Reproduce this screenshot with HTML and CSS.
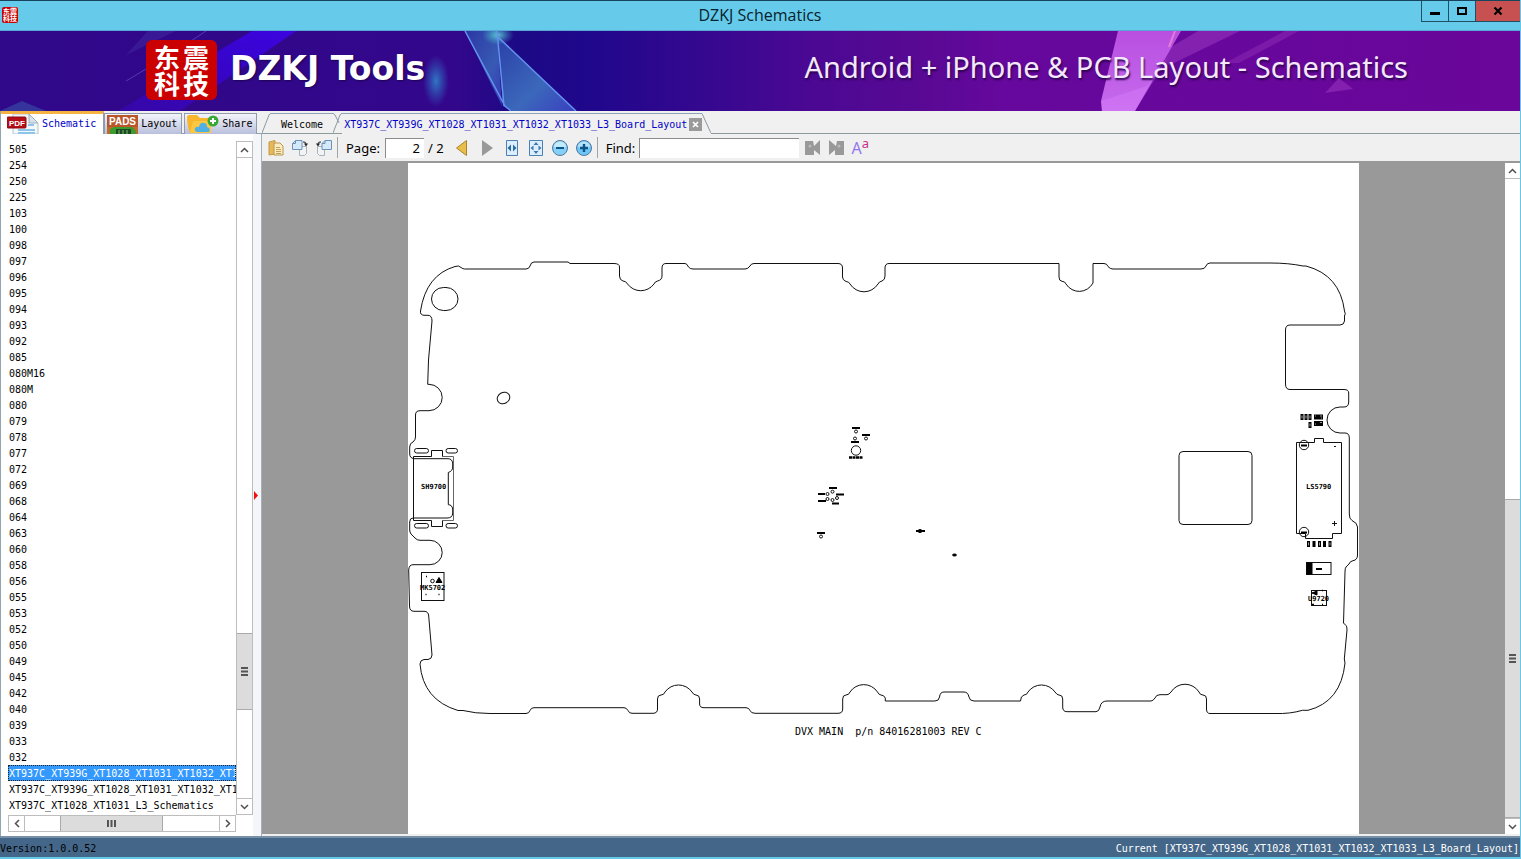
FILE: index.html
```html
<!DOCTYPE html>
<html lang="en">
<head>
<meta charset="utf-8">
<title>DZKJ Schematics</title>
<link rel="stylesheet" href="styles.css">
</head>
<body>
<div class="window">
  <header class="titlebar">
    <span class="app-icon" aria-hidden="true"><i>东</i><i>震</i><i>科</i><i>技</i></span>
    <h1 class="window-title">DZKJ Schematics</h1>
    <div class="window-buttons">
      <button class="win-btn" aria-label="Minimize"><svg width="10" height="10" viewBox="0 0 10 10"><path d="M0 6h10v3H0z"/></svg></button>
      <button class="win-btn" aria-label="Maximize"><svg width="10" height="10" viewBox="0 0 10 10"><path d="M1 2h8v6H1z" fill="none" stroke="#000" stroke-width="2"/></svg></button>
      <button class="win-btn win-close" aria-label="Close"><svg width="10" height="10" viewBox="0 0 10 10"><path d="M1.500 1.500l7 7M8.500 1.500l-7 7" stroke="#000" stroke-width="2.200"/></svg></button>
    </div>
  </header>

  <div class="banner">
    <svg class="banner-art" viewBox="0 0 1520 80" preserveAspectRatio="none" aria-hidden="true">
      <defs>
        <linearGradient id="sky" x1="0" x2="1" y1="0" y2="0">
          <stop offset="0" stop-color="#30088a"/><stop offset=".3" stop-color="#33078b"/><stop offset=".34" stop-color="#1c0a85"/>
          <stop offset=".39" stop-color="#20078c"/><stop offset=".46" stop-color="#34088f"/><stop offset=".53" stop-color="#4a0893"/><stop offset=".6" stop-color="#570993"/>
          <stop offset=".66" stop-color="#66089d"/><stop offset="1" stop-color="#6a069a"/>
        </linearGradient>
        <linearGradient id="ray" x1="1" x2="0" y1="0" y2="1"><stop offset="0" stop-color="#3d04e0"/><stop offset=".45" stop-color="#3605c8"/><stop offset="1" stop-color="#3a06c0" stop-opacity=".5"/></linearGradient>
        <linearGradient id="shard" x1="0" x2="1" y1="0" y2="1"><stop offset="0" stop-color="#2b3fa8"/><stop offset=".6" stop-color="#3b68bb"/><stop offset="1" stop-color="#3a3fc0"/></linearGradient>
        <linearGradient id="pink" x1="0" x2="0" y1="0" y2="1"><stop offset="0" stop-color="#b94fe0"/><stop offset="1" stop-color="#c66bee"/></linearGradient>
        <radialGradient id="glow"><stop offset="0" stop-color="#2f83c8" stop-opacity=".9"/><stop offset="1" stop-color="#2f6fc8" stop-opacity="0"/></radialGradient>
        <radialGradient id="spark"><stop offset="0" stop-color="#5fd3d8" stop-opacity=".9"/><stop offset="1" stop-color="#3fb0c8" stop-opacity="0"/></radialGradient>
      </defs>
      <rect width="1520" height="80" fill="url(#sky)"/>
      <path d="M252 0h44L180 80h-62z" fill="url(#ray)"/>
      <path d="M148 0h28l-50 24z" fill="#4a3aa8" opacity=".35"/>
      <path d="M206 0l-30 20M176 20l-50 30" stroke="#6a5ad0" stroke-width="1" opacity=".6"/>
      <path d="M0 80l22-10 24 10z" fill="#3a60b0" opacity=".5"/>
      <ellipse cx="436" cy="50" rx="13" ry="26" fill="url(#glow)"/>
      <path d="M465 0h32l5 75z" fill="url(#shard)" opacity=".85"/>
      <path d="M498 6l78 74h-64l-9-5z" fill="url(#shard)"/>
      <ellipse cx="498" cy="4" rx="16" ry="10" fill="url(#spark)"/>
      <path d="M465 0l40 75 6 5M497 0l7 75M498 6l78 74" stroke="#6392ee" stroke-width="1.500" fill="none"/>
      <path d="M1198 0h42l-70 34-16-8z" fill="#a03cc4" opacity=".5"/>
      <path d="M1285 0h14l-60 32h-14z" fill="#a03cc4" opacity=".35"/>
      <path d="M1118 0h63l-46 80h-33l-1-10z" fill="url(#pink)"/>
      <path d="M1101 70l46-15 22-30-34 55h-33z" fill="#dd83fb" opacity=".35"/>
      <path d="M1175 0l-6 16" stroke="#ff9ad0" stroke-width="2" opacity=".6"/>
      <path d="M1339 47l14 11-28 4z" fill="#8420b0"/>
    </svg>
    <div class="brand">
      <span class="logo" lang="zh"><i>东</i><i>震</i><i>科</i><i>技</i></span>
      <span class="brand-name">DZKJ Tools</span>
    </div>
    <p class="tagline">Android + iPhone &amp; PCB Layout - Schematics</p>
  </div>

  <main class="workspace">
    <aside class="sidebar">
      <div class="side-tabs" role="tablist">
        <button class="side-tab side-tab-active" role="tab" aria-selected="true">
          <svg width="32" height="20" viewBox="0 0 32 20" aria-hidden="true"><path d="M6 0h16l9 9v11H6z" fill="#f4f8fb" stroke="#b7c3cc"/><path d="M22 0v9h9z" fill="#d5e2ea" stroke="#9fb0bc"/><path d="M11 16h17M11 19h17M21 11h6" stroke="#8ec5ea" stroke-width="2"/><rect y="3" width="19" height="11" rx="1" fill="#b40e18" stroke="#8d0a12"/><text x="2" y="12" class="badge-text">PDF</text></svg>
          Schematic
        </button>
        <button class="side-tab" role="tab" aria-selected="false">
          <svg width="31" height="19" viewBox="0 0 31 19" aria-hidden="true"><rect width="31" height="19" fill="#c06a2a"/><rect width="31" height="12" fill="#b9572a"/><path d="M3 19v-5l4-2h18l4 4v3z" fill="#3d9a2c"/><rect x="9" y="14" width="15" height="5" fill="#1c4a24"/><path d="M12 15v4M16 15v4M20 15v4" stroke="#74c060"/><text x="2" y="10" class="badge-text badge-pads">PADS</text></svg>
          Layout
        </button>
        <button class="side-tab" role="tab" aria-selected="false">
          <svg width="32" height="18" viewBox="0 0 32 18" aria-hidden="true"><path d="M0 2q0-2 2-2h8l3 3h11v15H3q-3-7-3-16z" fill="#f8b62c"/><path d="M3 18L6 6h18v12z" fill="#fdc741"/><path d="M10 17q-3-1-2-4 2-2 4-1 1-5 5-4 3 0 3 4 4 1 2 5z" fill="#4fb0e6"/><circle cx="26" cy="6" r="5.500" fill="#39a935"/><path d="M26 3v6M23 6h6" stroke="#fff" stroke-width="2"/></svg>
          Share
        </button>
      </div>
      <div class="side-panel">
        <ul class="file-list" role="listbox" aria-label="Schematics">
          <li>505</li><li>254</li><li>250</li><li>225</li><li>103</li><li>100</li><li>098</li><li>097</li><li>096</li><li>095</li>
          <li>094</li><li>093</li><li>092</li><li>085</li><li>080M16</li><li>080M</li><li>080</li><li>079</li><li>078</li><li>077</li>
          <li>072</li><li>069</li><li>068</li><li>064</li><li>063</li><li>060</li><li>058</li><li>056</li><li>055</li><li>053</li>
          <li>052</li><li>050</li><li>049</li><li>045</li><li>042</li><li>040</li><li>039</li><li>033</li><li>032</li>
          <li class="selected">XT937C_XT939G_XT1028_XT1031_XT1032_XT1033_L3_Board_Layout</li>
          <li>XT937C_XT939G_XT1028_XT1031_XT1032_XT1033_L3_Schematics</li>
          <li>XT937C_XT1028_XT1031_L3_Schematics</li>
        </ul>
        <div class="vscroll">
          <button class="sb-btn" aria-label="Scroll up"><svg width="9" height="6" viewBox="0 0 9 6"><path d="M1 5l3.500-3.500L8 5"/></svg></button>
          <div class="sb-track sb-side"><div class="sb-thumb"><svg width="7" height="9" viewBox="0 0 7 9"><path d="M0 1h7M0 4.500h7M0 8h7"/></svg></div></div>
          <button class="sb-btn" aria-label="Scroll down"><svg width="9" height="6" viewBox="0 0 9 6"><path d="M1 1l3.500 3.500L8 1"/></svg></button>
        </div>
        <div class="hscroll">
          <button class="sb-btn" aria-label="Scroll left"><svg width="6" height="9" viewBox="0 0 6 9"><path d="M5 1L1.500 4.500 5 8"/></svg></button>
          <div class="sb-track sb-horizontal"><div class="sb-thumb"><svg width="9" height="7" viewBox="0 0 9 7"><path d="M1 0v7M4.500 0v7M8 0v7"/></svg></div></div>
          <button class="sb-btn" aria-label="Scroll right"><svg width="6" height="9" viewBox="0 0 6 9"><path d="M1 1l3.500 3.500L1 8"/></svg></button>
        </div>
      </div>
    </aside>
    <div class="splitter" role="separator"><svg width="6" height="9" viewBox="0 0 6 9" aria-hidden="true"><path d="M1 0l4 4.500L1 9z" fill="#f01010"/></svg></div>

    <section class="viewer">
      <div class="doc-tabs" role="tablist">
        <button class="doc-tab" role="tab" aria-selected="false">
          <svg class="edge" width="9" height="20" viewBox="0 0 9 20"><path d="M0 20L7 2Q8 .5 9 .5"/></svg>
          <span class="doc-label">Welcome</span>
          <svg class="edge" width="9" height="20" viewBox="0 0 9 20"><path d="M0 .5Q1 .5 2 2l4 8"/></svg>
        </button>
        <div class="doc-tab doc-tab-active">
          <svg class="edge" width="9" height="20" viewBox="0 0 9 20"><path d="M0 20L7 2Q8 .5 9 .5"/></svg>
          <span class="doc-label"><button class="tab-name" role="tab" aria-selected="true">XT937C_XT939G_XT1028_XT1031_XT1032_XT1033_L3_Board_Layout</button>
          <button class="tab-close" aria-label="Close tab"><svg width="7" height="7" viewBox="0 0 7 7"><path d="M1 1l5 5M6 1L1 6" stroke="#fff" stroke-width="1.700"/></svg></button></span>
          <svg class="edge" width="9" height="20" viewBox="0 0 9 20"><path d="M0 .5L8 18l1 2"/></svg>
        </div>
        <div class="doc-fill"></div>
      </div>

      <div class="toolbar" role="toolbar">
        <button class="tool" aria-label="Copy"><svg width="16" height="16" viewBox="0 0 16 16"><path d="M1 2l6-1.500V14L1 15z" fill="#e8b95c" stroke="#c39a45"/><path d="M6 3h6l3 3v9H6z" fill="#fbecc0" stroke="#b9964c"/><path d="M8 7.500h4M8 9.500h5M8 11.500h5M8 13.500h5" stroke="#c4a25c"/></svg></button>
        <button class="tool" aria-label="Rotate right"><svg width="16" height="16" viewBox="0 0 16 16"><path d="M7.500 6.500h7v7l-2 2h-5z" fill="#f1f3f5" stroke="#a8b2bb"/><path d="M3.500.5H10v9H.5v-6z" fill="#d5e9fa" stroke="#6b93ba"/><path d="M.5 3.500h3v-3" fill="none" stroke="#6b93ba"/><path d="M11 2q3-.5 3 2" fill="none" stroke="#222"/><path d="M12 3.500h4l-2 3z" fill="#222"/></svg></button>
        <button class="tool" aria-label="Rotate left"><svg width="16" height="16" viewBox="0 0 16 16"><path d="M1.500 6.500h7v9h-5l-2-2z" fill="#f1f3f5" stroke="#a8b2bb"/><path d="M9 .5h6.500v9H6v-6z" fill="#d5e9fa" stroke="#6b93ba"/><path d="M6 3.500h3v-3" fill="none" stroke="#6b93ba"/><path d="M5 2q-3-.5-3 2" fill="none" stroke="#222"/><path d="M0 3.500h4l-2 3z" fill="#222"/></svg></button>
        <span class="sep"></span>
        <label class="tool-label" for="page">Page:</label>
        <input class="page-input" id="page" type="text" value="2">
        <span class="page-total">/ 2</span>
        <button class="tool" aria-label="Previous page"><svg width="12" height="16" viewBox="0 0 12 16"><path d="M10.500.5v15L.5 8z" fill="#e9bf4b" stroke="#aa8427"/></svg></button>
        <button class="tool tool-wide" aria-label="Next page"><svg width="12" height="16" viewBox="0 0 12 16"><path d="M1 0l11 8-11 8z" fill="#999"/></svg></button>
        <button class="tool" aria-label="Fit width"><svg width="12" height="16" viewBox="0 0 12 16"><path d="M.5.5h11v15H.5z" fill="#dceefc" stroke="#4c80b4"/><path d="M5 4.500v7L1.500 8zM7 4.500v7L10.500 8z" fill="#2b6ca3"/></svg></button>
        <button class="tool" aria-label="Fit page"><svg width="14" height="16" viewBox="0 0 14 16"><path d="M.5.5h13v15H.5z" fill="#dceefc" stroke="#4c80b4"/><path d="M7 2l2.500 3h-5zM7 14l2.500-3h-5zM1.500 8l3-2.500v5zM12.500 8l-3-2.500v5z" fill="#3d78ac"/></svg></button>
        <button class="tool" aria-label="Zoom out"><svg width="16" height="16" viewBox="0 0 16 16"><circle cx="8" cy="8" r="7.500" fill="#84d0f8" stroke="#52789d"/><path d="M2 7a6 5.500 0 0 1 12 0q-6 3-12 0" fill="#c4eafd"/><path d="M4 8h8" stroke="#0d5487" stroke-width="2"/></svg></button>
        <button class="tool" aria-label="Zoom in"><svg width="16" height="16" viewBox="0 0 16 16"><circle cx="8" cy="8" r="7.500" fill="#6ec6f6" stroke="#52789d"/><path d="M2 7a6 5.500 0 0 1 12 0q-6 3-12 0" fill="#b4e2fb"/><path d="M4 8h8M8 4v8" stroke="#0d5487" stroke-width="2.400"/></svg></button>
        <span class="sep"></span>
        <label class="tool-label" for="find">Find:</label>
        <input class="find-input" id="find" type="text">
        <button class="tool" aria-label="Find previous"><svg width="15" height="15" viewBox="0 0 15 15"><path d="M0 1h8l1 5 6-6v15l-6-5v5H0z" fill="#999"/><circle cx="5" cy="6" r="1.500" fill="#bbb"/></svg></button>
        <button class="tool" aria-label="Find next"><svg width="15" height="15" viewBox="0 0 15 15"><path d="M15 1H8L7 6 0 0v15l6-5v5h9z" fill="#999"/><circle cx="10" cy="6" r="1.500" fill="#bbb"/></svg></button>
        <button class="tool match-case" aria-label="Match case">A<sup>a</sup></button>
      </div>

      <div class="canvas-row">
        <div class="canvas">
          <svg class="page" viewBox="408 163 951 671" role="img" aria-label="DVX MAIN board layout">
            <g class="lines">
              <path d="M464.700 269H526Q529 269 530 266Q531 262 534 262H568L570 263.500H614Q619.500 263.500 619.500 267V276Q619.500 280 623 281Q626 281 627.500 284A17 18 0 0 0 654 284Q655 281.500 657.500 281Q662 280 662 276V268Q662 263.500 666 263.500H685Q687 263.500 688.500 267Q690 269 693 269H745Q748 269 750 266Q751 263.500 754 263.500H838Q842.500 263.500 842.500 268V277Q842.500 280 846 281.500Q849 281.500 850 284A17 18 0 0 0 878 284Q879 281.500 882 281Q885 280 885 276V268Q885 263.500 889 263.500H1059V277Q1059 281 1062 281.300Q1065 281.300 1066 284A16 17 0 0 0 1093 283V263.500H1104Q1107 263.500 1108 266.500Q1110 269 1113 269H1201Q1205 269 1206 266Q1207 263 1210 263H1270Q1289 263 1303 266H1306Q1340 275 1344.500 311Q1346 314 1344.500 316V321Q1344 325 1340 325H1290Q1285.500 325 1285.500 330V384Q1285.500 389.500 1290 389.500H1344Q1348.700 389.500 1348.700 393V402Q1348.700 407 1344 407H1340A13 13 0 0 0 1340 433H1345Q1349.300 433 1349.300 438V514Q1349.300 519 1352 520.500Q1357.500 523 1357.500 527V555Q1357.500 560 1353 560.700Q1350 561 1349 564L1346 567Q1345 568 1345 572L1343.500 623L1346 625.500Q1347 626 1347 630L1344.300 659L1345 663Q1341 702 1308 710.300H1302.500Q1290 714 1275 713.500H1210Q1206.500 713.500 1206.500 709V699Q1206.500 695 1203 695Q1200 695 1199 692A16.500 16.500 0 0 0 1171 692Q1169 694.700 1167 694.700H1160Q1156 694.700 1155 698Q1153 701 1151 701H1107Q1101 701 1100 707Q1099 711.700 1096 711.700H1067Q1062.700 711.700 1062.700 707V699Q1062.700 695 1059 695Q1057 695 1055 692A16.500 16.500 0 0 0 1028 692Q1027 695 1024 695Q1020.500 696 1020.500 701H974Q969.500 701 969 697Q968 692 964 692H944Q940 692 939.500 697Q939 701 935 701H885.300V698Q884 695 881 695Q879 695 877.500 692A16.500 16.500 0 0 0 850 692Q849 695 846 695Q842.700 695 842.700 699V709Q842.700 713.300 838 713.300H755Q751 713.300 750 710.500Q749 707.700 746 707.700H704Q699.600 707.700 699.600 704V699Q699.600 695 696 695Q693.500 695 692 692A16.500 16.500 0 0 0 665 692Q664 695 661 695Q657.500 695 657.500 699V709Q657.500 713.300 653 713.300H632Q629 713.300 628 710.500Q626.500 707.700 624 707.700H534Q531 707.700 530 710.500Q529 713.500 526 713.500H490Q475 713.500 463 710.500H458Q423 700 420 664Q420 660 424 659.500H428Q432 659 432 655L428.700 616Q428.500 611.300 424 611.300H414Q409.500 611.300 409.500 606L408.700 570Q409 564.700 413 564.700H430A12 12 0 0 0 430 540.300H420Q417 540.300 415 538L411 534Q409.700 532 409.700 530V522Q409.700 518 413 518H447Q452.700 518 452.700 513V509Q452 504.700 448.300 504.700V472.500Q452.700 471 452.700 467V463Q452 458.700 448 458.700H414Q409.700 458 409.700 454V447Q409.700 443 413 442Q415.500 440 415.500 437V415Q415.500 410.700 420 410.700H429A13 13 0 0 0 429 384.300H427.700L428.500 360L432 321Q432 315.300 428 315.300H424Q420 315 420.500 311Q426 275 455 266.500Q459 265 461 267.500Q463 269 464.700 269Z"/>
              <rect x="431.500" y="287.500" width="26.500" height="23" rx="12"/>
              <ellipse cx="503.500" cy="398" rx="6.500" ry="5.500" transform="rotate(-30 503.500 398)"/>
              <path class="soft" d="M442.500 456.500h11v64h-11"/>
              <path d="M431.500 456.500v-6h11v6M431.500 520.500v6h11v-6M431.500 456.500h-18v64h18"/>
              <rect x="414.500" y="448.500" width="14" height="4.500" rx="2.200"/><rect x="446" y="448.500" width="11.500" height="4.500" rx="2.200"/>
              <rect x="414.500" y="523.500" width="14" height="4.500" rx="2.200"/><rect x="446" y="523.500" width="11.500" height="4.500" rx="2.200"/>
              <rect x="421.500" y="572.500" width="22.500" height="28"/><circle cx="432.500" cy="581" r="1.800"/>
              <rect x="1179" y="451.500" width="73" height="73" rx="4"/>
              <path d="M1296.500 442.500H1314.500v-4h9v4h18v91h-9v5h-27v-5h-9z"/>
              <circle cx="1304" cy="445" r="4.700"/><circle cx="1304" cy="532" r="4.700"/><path d="M1332 523.500h5M1334.500 521v5M1334 446.500h2"/>
              <rect x="1306.500" y="562.500" width="24.500" height="12"/><rect x="1311.500" y="590.500" width="15" height="15"/>
              <circle cx="856" cy="431.500" r="1.500"/><circle cx="855" cy="438.500" r="1.500"/><circle cx="866" cy="438.500" r="1.500"/><circle cx="856" cy="450.500" r="4.700"/>
              <circle cx="832.500" cy="491.700" r="1.500"/><circle cx="827.500" cy="494" r="1.500"/><circle cx="827.500" cy="499" r="1.500"/><circle cx="832.500" cy="500" r="1.500"/><circle cx="837" cy="498" r="1.500"/><circle cx="821" cy="536.500" r="1.500"/>
            </g>
            <g class="marks">
              <path d="M852 428h8M862 435h8M851 442h8M829 488h8M818 494h7M836 494.500h8M818 501h8M832 503.500h7M817 533h8M916 531h9M1301 445.500h6M1301 532.500h6M1316 569h6" stroke-width="2"/>
              <path d="M849 457.500h14" stroke-width="2.500" stroke-dasharray="3 .5"/>
              <path d="M1302 414v6M1306 414v6M1310 414v6M1310 422v6M1308.500 541v6M1314 541v6M1319.500 541v6M1324.500 541v6M1330 541v6" stroke-width="3"/>
              <path d="M1314 417h9M1314 423.500h9" stroke-width="5"/>
              <ellipse cx="920" cy="531" rx="2" ry="1.500"/><ellipse cx="954.500" cy="555" rx="2" ry="1"/><path d="M436 582.500l3-5 3 5zM1307 563h5v11h-5zM1312 593l5-2v4z"/>
              <path d="M426 576.500h1M425.500 594.500h1M438.500 594.500h1M1322 590.500h1M1312 604.500h2M1322 604.500h1" stroke-width="1.500"/>
            </g>
            <path d="M1315 416h1M1320 416h2M1321 418h1M1320 422.500h2M1315 424h1M1302 415.500v3M1306 415.500v3M1310 415.500v3M1310 423.500v3M1308.500 542.500v3M1319.500 542.500v3M1330 542.500v3" stroke="#999"/>
            <g class="part-name"><text x="421" y="489">SH9700</text><text x="420" y="590">MK5702</text><text x="1306" y="489">LS5790</text><text x="1308" y="601">U9720</text></g>
            <text class="board-name" x="795" y="735">DVX MAIN  p/n 84016281003 REV C</text>
          </svg>
        </div>
        <div class="vscroll doc-scroll">
          <button class="sb-btn" aria-label="Scroll up"><svg width="9" height="6" viewBox="0 0 9 6"><path d="M1 5l3.500-3.500L8 5"/></svg></button>
          <div class="sb-track sb-doc"><div class="sb-thumb"><svg width="7" height="9" viewBox="0 0 7 9"><path d="M0 1h7M0 4.500h7M0 8h7"/></svg></div></div>
          <button class="sb-btn" aria-label="Scroll down"><svg width="9" height="6" viewBox="0 0 9 6"><path d="M1 1l3.500 3.500L8 1"/></svg></button>
        </div>
      </div>
    </section>
  </main>

  <footer class="statusbar">
    <span class="version">Version:1.0.0.52</span>
    <span class="current">Current [XT937C_XT939G_XT1028_XT1031_XT1032_XT1033_L3_Board_Layout]</span>
  </footer>
</div>
</body>
</html>
```
FILE: styles.css
```css
* { box-sizing: border-box; }
body { margin: 0; font: 10px/16px "DejaVu Sans Mono", "Noto Sans CJK SC", monospace; color: #000; }
button { margin: 0; padding: 0; border: 0; background: none; font: inherit; color: inherit; }
svg { display: block; flex: none; }
i { font-style: normal; }

.window { display: flex; flex-direction: column; height: 100vh; overflow: hidden; background: #f0f0f0; border-right: 1px solid #66c8e8; border-bottom: 2px solid #66c8e8; }

.titlebar { display: grid; grid-template-columns: 99px 1fr 99px; height: 31px; flex: none; background: #66cbea; border-top: 1px solid #17445c; border-bottom: 1px solid #5aa6d6; }
.app-icon { display: grid; grid-template-columns: 7px 7px; place-content: center; width: 16px; height: 16px; margin: 6px 0 0 2px; border-radius: 2px; background: #c80000; color: #fff; font: 700 7px/7px "Noto Sans CJK SC", sans-serif; }
.window-title { margin: 0; text-align: center; font: 400 16px/28px "Open Sans", "Noto Sans", sans-serif; color: #06222e; }
.window-buttons { display: flex; height: 21px; border: solid #1f4f63; border-width: 0 0 1px 1px; }
.win-btn { width: 27px; display: grid; place-items: center; border-right: 1px solid #1f4f63; }
.win-close { flex: 1; background: #c75050; border-right: 0; }

.banner { position: relative; display: flex; align-items: center; justify-content: space-between; height: 80px; flex: none; padding: 0 112px 2px 146px; color: #fff; overflow: hidden; }
.banner-art { position: absolute; inset: 0; width: 100%; height: 100%; }
.brand { position: relative; display: flex; align-items: center; gap: 13px; }
.logo { display: grid; grid-template-columns: 29px 29px; place-content: center; width: 71px; height: 60px; border-radius: 6px; background: #cb0000; font: 700 26px/26px "Noto Sans CJK SC", sans-serif; text-align: center; }
.brand-name { padding-bottom: 2px; font: 700 33px/40px "DejaVu Sans", sans-serif; text-shadow: 1px 1px 2px #1a0650; }
.tagline { position: relative; margin: 0 0 6px; font: 400 29px/40px "Noto Sans", sans-serif; color: #f4e8fb; text-shadow: 1px 2px 2px #2c0450; }

.workspace { display: flex; flex: 1; min-height: 0; }
.sidebar { display: flex; flex-direction: column; width: 253px; flex: none; border-left: 1px solid #8fa5b2; }
.side-tabs { display: flex; height: 23px; gap: 2px; flex: none; margin-right: -9px; border-bottom: 1px solid #8fa0ae; }
.side-tab { display: flex; align-items: center; gap: 3px; height: 21px; margin-top: 2px; padding: 0 4px 0 2px; border: 1px solid #8f9cb0; border-bottom: 0; background: linear-gradient(#f4f5fa, #b9bfdc); }
.side-tab-active { height: 23px; margin: 0 -2px 0 0; padding: 0 7px 0 6px; border-top: 3px solid #f5b342; border-left: 0; background: #fff; color: #0000c8; }
.badge-text { font: 700 8px "Liberation Sans", sans-serif; fill: #fff; }
.badge-pads { font-size: 10px; }
.side-panel { display: grid; grid-template: minmax(0, 1fr) 17px / minmax(0, 1fr) 17px; flex: 1; min-height: 0; padding: 7px 0 4px 7px; background: #fff; }
.file-list { margin: 0; padding: 0; list-style: none; overflow: hidden; white-space: nowrap; }
.file-list li { height: 16px; padding-left: 1px; line-height: 17px; overflow: hidden; }
.file-list .selected { background: #3399ff; color: #fff; outline: 1px dotted #222; outline-offset: -1px; }

.vscroll { display: flex; flex-direction: column; border: 1px solid #bdbdbd; background: #fff; }
.hscroll { display: flex; border: 1px solid #bdbdbd; background: #fff; }
.sb-btn { display: grid; place-items: center; width: 15px; height: 15px; flex: none; }
.sb-btn path { fill: none; stroke: #505050; stroke-width: 1.5; }
.sb-track { display: flex; flex: 1; border: solid #bdbdbd; }
.vscroll .sb-track { flex-direction: column; border-width: 1px 0; }
.hscroll .sb-track { border-width: 0 1px; }
.sb-thumb { display: grid; place-items: center; background: #dcdcdc; border: solid #aaa; }
.sb-thumb path { stroke: #555; stroke-width: 2; }
.vscroll .sb-thumb { border-width: 1px 0; }
.hscroll .sb-thumb { border-width: 0 1px; }
.sb-side .sb-thumb { height: 12%; margin-top: 475px; }
.sb-horizontal .sb-thumb { width: 53%; margin-left: 18%; }
.sb-doc { justify-content: flex-end; }
.sb-doc .sb-thumb { height: 50%; }

.splitter { display: flex; align-items: center; width: 9px; flex: none; margin-top: 23px; padding-top: 20px; border-right: 1px solid #a6b0ba; background: #f4f6fa; }

.viewer { display: flex; flex-direction: column; flex: 1; min-width: 0; }
.doc-tabs { display: flex; align-items: flex-end; height: 23px; flex: none; }
.doc-tab { display: flex; height: 21px; border-bottom: 1px solid #8f9a9f; }
.doc-tab .edge path { fill: none; stroke: #8b9aa3; }
.doc-tab-active { height: 21px; margin-left: -9px; border-bottom: 0; color: #0000c8; }
.doc-label { display: flex; align-items: center; gap: 2px; height: 20px; padding: 2px 10px 0; border-top: 1px solid #8fa3b8; }
.doc-tab-active .doc-label { padding: 2px 0 0 2px; }
.tab-close { display: grid; place-items: center; width: 13px; height: 13px; background: #9a9a9a; }
.doc-fill { flex: 1; height: 21px; border-bottom: 1px solid #8f9a9f; }

.toolbar { display: flex; align-items: center; height: 29px; flex: none; padding-left: 2px; border-bottom: 2px solid #999; font: 13px/20px "Noto Sans", sans-serif; }
.tool { display: grid; place-items: center; width: 24px; height: 24px; flex: none; }
.tool-wide { width: 26px; }
.sep { width: 1px; height: 21px; margin: 0 8px 0 1px; background: #a3a3a3; }
.toolbar input { height: 20px; border: solid #8c8c8c; border-width: 1px 0 0 1px; background: #fff; font: inherit; outline: 0; }
.page-input { width: 39px; margin: 0 4px 0 5px; padding: 0 4px 0 0; text-align: right; }
.page-total { margin-right: 6px; }
.find-input { width: 160px; margin: 0 1px 0 4px; }
.match-case { display: flex; align-items: center; justify-content: center; color: #9278ee; font-size: 16px; }
.match-case sup { font-size: 13px; line-height: 14px; color: #c8308c; align-self: flex-start; }

.canvas-row { display: flex; flex: 1; min-height: 0; margin-bottom: 2px; }
.canvas { flex: 1; min-width: 0; padding: 0 146px; background: #999; overflow: hidden; }
.page { width: 100%; min-height: 100%; background: #fff; }
.doc-scroll { width: 15px; flex: none; border-width: 0; }
.lines { fill: none; stroke: #111; stroke-width: 1; }
.soft { stroke: #666; }
.marks { fill: #000; stroke: #000; stroke-width: 1; }
.part-name { font: 700 7px "DejaVu Sans Mono", monospace; }
.board-name { font: 400 10px "DejaVu Sans Mono", monospace; white-space: pre; }

.statusbar { display: flex; justify-content: space-between; align-items: flex-end; height: 21px; flex: none; border-top: 2px solid #7790a6; background: #446688; }
.current { padding-right: 1px; color: #fff; }
```
